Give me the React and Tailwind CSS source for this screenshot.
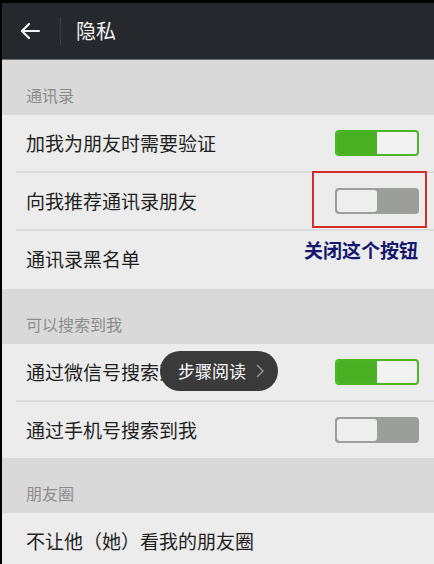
const CJK = { fontFamily: '"Noto Sans CJK SC", "Noto Sans", sans-serif' };

function BackArrow() {
  return (
    <svg width="22" height="20" viewBox="0 0 22 20" fill="none" stroke="#f2f2f2" strokeWidth="2.2" strokeLinecap="round" strokeLinejoin="round" aria-hidden="true">
      <path d="M20 10H3" />
      <path d="M10 3L3 10l7 7" />
    </svg>
  );
}

function Toggle({ on }) {
  if (on) {
    return (
      <div className="flex h-[26px] w-[84px] overflow-hidden rounded-[4px] border-2 border-[#4cb52a]">
        <div className="w-[40px] bg-[#47b122]" />
        <div className="flex-1 rounded-[3px] bg-[#f2f2f2]" />
      </div>
    );
  }
  return (
    <div className="flex h-[26px] w-[84px] overflow-hidden rounded-[4px] border-2 border-[#9c9e9b] bg-[#9c9e9b]">
      <div className="w-[40px] rounded-[3px] bg-[#eeeeee]" />
      <div className="flex-1 bg-[#9c9e9b]" />
    </div>
  );
}

function Section({ title }) {
  return (
    <div className="flex h-[55px] items-end bg-[#d9d9d9] pb-[8px] pl-[24px] text-[16px] text-[#8c8c8c]">
      {title}
    </div>
  );
}

function Row({ label, toggle, divider, children }) {
  return (
    <div className="relative bg-[#ececec]">
      {divider && <div className="ml-[14px] h-[2px] bg-[#dcdcdc]" />}
      <div className="flex h-[56px] items-center justify-between pl-[24px] pr-[15px]">
        <span className="text-[19px] text-[#1f1f1f]">{label}</span>
        {toggle !== undefined && <Toggle on={toggle} />}
      </div>
      {children}
    </div>
  );
}

export default function App() {
  return (
    <div className="h-[564px] w-[434px] overflow-hidden bg-black pl-[2px] pt-[3px]" style={CJK}>
      <div className="h-full bg-[#ececec]">
        <div className="flex h-[57px] items-center border-b border-[#6e7174] bg-[#25292d]">
          <div className="flex w-[56px] justify-center">
            <BackArrow />
          </div>
          <div className="ml-[2px] h-[28px] w-[1px] bg-[#3c4146]" />
          <span className="pl-[15px] text-[20px] text-[#f0f0f0]">隐私</span>
        </div>

        <Section title="通讯录" />
        <Row label="加我为朋友时需要验证" toggle={true} />
        <Row label="向我推荐通讯录朋友" toggle={false} divider>
          <div className="absolute left-[310px] top-0 h-[57px] w-[115px] border-2 border-[#d42b2b]" />
        </Row>
        <Row label="通讯录黑名单" divider>
          <span className="absolute left-[302px] top-[7px] text-[19px] font-bold text-[#16186e]">
            关闭这个按钮
          </span>
          <div className="h-[2px]" />
        </Row>

        <Section title="可以搜索到我" />
        <Row label="通过微信号搜索到我" toggle={true}>
          <div className="absolute left-[158px] top-[7px] flex h-[40px] w-[118px] items-center justify-center gap-[10px] rounded-full bg-[#3a3a3a] pl-[4px]">
            <span className="text-[17px] text-white">步骤阅读</span>
            <svg width="8" height="14" viewBox="0 0 8 14" fill="none" stroke="#9a9a9a" strokeWidth="1.4" aria-hidden="true">
              <path d="M1 1l6 6-6 6" />
            </svg>
          </div>
        </Row>
        <Row label="通过手机号搜索到我" toggle={false} divider />

        <Section title="朋友圈" />
        <Row label="不让他（她）看我的朋友圈" />
      </div>
    </div>
  );
}
